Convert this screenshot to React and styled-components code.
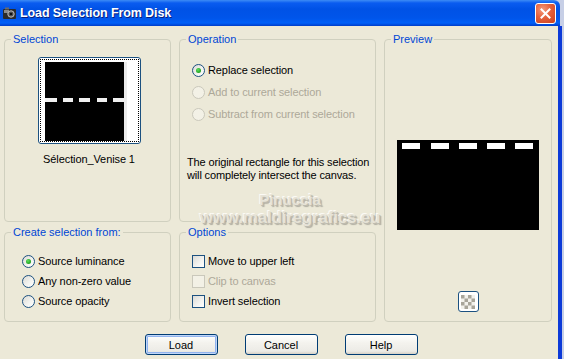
import React from 'react';
import styled, { createGlobalStyle } from 'styled-components';

const GlobalStyle = createGlobalStyle`
  html, body {
    margin: 0;
    padding: 0;
    background: #c7cfe6;
  }
  body {
    font-family: 'Liberation Sans', Arial, sans-serif;
    font-size: 11px;
    color: #000;
  }
`;

const Window = styled.div`
  width: 562px;
  height: 359px;
  display: flex;
  flex-direction: column;
  overflow: hidden;
`;

const TitleBar = styled.div`
  height: 26px;
  width: 560px;
  box-sizing: border-box;
  display: flex;
  align-items: center;
  padding: 0 4px 0 2px;
  gap: 3px;
  background: linear-gradient(
    180deg,
    #3d8cf5 0,
    #0a5cf0 3px,
    #0052e6 9px,
    #0055ea 18px,
    #0060f8 23px,
    #0048d8 25px,
    #003dc8 26px
  );
  border-top-right-radius: 6px;
`;

const Title = styled.span`
  flex: 1;
  color: #fff;
  font-family: 'Liberation Sans', Arial, sans-serif;
  font-weight: 700;
  font-size: 12.5px;
  letter-spacing: -0.1px;
  text-shadow: 1px 1px 0 #0a1e7a;
`;

const CloseButton = styled.div`
  width: 21px;
  height: 21px;
  box-sizing: border-box;
  border: 1px solid #fff;
  border-radius: 3px;
  background: radial-gradient(circle at 35% 30%, #f49a7c 0, #e5603b 45%, #c8401e 100%);
  display: flex;
  align-items: center;
  justify-content: center;
`;

const Body = styled.div`
  position: relative;
  flex: 1;
  width: 554px;
  background: #ece9d8;
  border-right: 4px solid #0c3ad8;
  padding: 7px 0 0 4px;
  box-sizing: content-box;
`;

const Panels = styled.div`
  display: grid;
  grid-template-columns: 167px 197px 168px;
  grid-template-rows: 189px 96px;
  column-gap: 8px;
  row-gap: 4px;
`;

const Group = styled.fieldset`
  margin: 0;
  padding: 0;
  min-width: 0;
  border: 1px solid #d0d0bf;
  border-radius: 4px;
  box-sizing: border-box;
  grid-column: ${(props) => props.$col};
  grid-row: ${(props) => props.$row};
  display: flex;
  flex-direction: column;
`;

const Legend = styled.legend`
  margin-left: 6px;
  padding: 0 2px;
  line-height: 13px;
  font-size: 11px;
  color: #0046d5;
`;

const GroupBody = styled.div`
  display: flex;
  flex-direction: column;
  align-items: ${(props) => (props.$center ? 'center' : 'stretch')};
  padding: ${(props) => props.$pad || '0'};
`;

const Thumb = styled.div`
  width: 103px;
  height: 87px;
  box-sizing: border-box;
  border: 1px solid #1c5180;
  border-radius: 3px;
  background: #fff;
  padding: 1px;
  margin-left: 3px;
`;

const FocusRect = styled.div`
  width: 100%;
  height: 100%;
  box-sizing: border-box;
  border: 1px dotted #000;
  display: flex;
`;

const Caption = styled.div`
  margin-top: 9px;
  margin-left: 3px;
  line-height: 13px;
  letter-spacing: -0.1px;
`;

const Row = styled.div`
  display: flex;
  align-items: center;
  gap: 3px;
  height: ${(props) => props.$h || 20}px;
  padding-left: ${(props) => props.$indent || 0}px;
  color: ${(props) => (props.$disabled ? '#aca899' : '#000')};
  letter-spacing: -0.1px;
  white-space: nowrap;
`;

const Radio = styled.span`
  width: 13px;
  height: 13px;
  box-sizing: border-box;
  border-radius: 50%;
  border: 1px solid ${(props) => (props.$disabled ? '#cac8bb' : '#1c5180')};
  background: ${(props) =>
    props.$disabled
      ? '#f3f1e6'
      : 'linear-gradient(135deg, #dcdbd5 0, #f4f4f1 60%, #ffffff 100%)'};
  display: inline-flex;
  align-items: center;
  justify-content: center;
  flex-shrink: 0;
`;

const Dot = styled.span`
  width: 5px;
  height: 5px;
  border-radius: 50%;
  background: radial-gradient(circle at 40% 35%, #5ce05c 0, #21a121 70%);
`;

const Check = styled.span`
  width: 13px;
  height: 13px;
  box-sizing: border-box;
  border: 1px solid ${(props) => (props.$disabled ? '#cac8bb' : '#1c5180')};
  background: ${(props) =>
    props.$disabled
      ? '#f3f1e6'
      : 'linear-gradient(135deg, #dcdbd5 0, #f4f4f1 60%, #ffffff 100%)'};
  flex-shrink: 0;
`;

const Note = styled.p`
  margin: 31px 0 0;
  line-height: 12.5px;
  letter-spacing: -0.15px;
  white-space: nowrap;
`;

const PreviewImage = styled.svg`
  display: block;
  margin-top: 94px;
`;

const SmallButton = styled.div`
  width: 21px;
  height: 21px;
  box-sizing: border-box;
  border: 1px solid #1c5180;
  border-radius: 3px;
  background: #fff;
  margin-top: 61px;
  display: flex;
  align-items: center;
  justify-content: center;
`;

const ButtonRow = styled.div`
  display: flex;
  justify-content: center;
  gap: 27px;
  margin-top: 12px;
`;

const Button = styled.div`
  width: 73px;
  height: 21px;
  box-sizing: border-box;
  border: 1px solid #003c74;
  border-radius: 3px;
  background: linear-gradient(180deg, #ffffff 0, #f4f3ee 40%, #ecebe6 85%, #d6d0c5 100%);
  box-shadow: ${(props) =>
    props.$primary
      ? 'inset 0 0 0 1px #c0d6f8, inset 0 0 0 2px #91b3ee'
      : 'none'};
  display: flex;
  align-items: center;
  justify-content: center;
  font-size: 11px;
`;

const Watermark = styled.div`
  position: absolute;
  left: 188px;
  top: 165px;
  width: 204px;
  text-align: center;
  font-family: 'Liberation Sans', Arial, sans-serif;
  font-weight: 700;
  color: #e6e3d7;
  text-shadow: 1px 1px 0 #bebbb0, 2px 2px 1px rgba(90, 88, 80, 0.4), -1px -1px 0 #fbfaf5;
  pointer-events: none;
`;

const MarkLine = styled.div`
  font-size: ${(props) => props.$size}px;
  line-height: ${(props) => props.$lh}px;
  letter-spacing: ${(props) => props.$spacing || 0}px;
`;

function AppIcon() {
  return (
    <svg width="15" height="15" viewBox="0 0 15 15">
      <rect x="1" y="3" width="13" height="10" rx="1" fill="#2b2b2b" />
      <rect x="2" y="4" width="5" height="3" fill="#8a8a8a" />
      <circle cx="9" cy="8" r="3.2" fill="#555" stroke="#bdbdbd" strokeWidth="1" />
      <circle cx="9" cy="8" r="1.3" fill="#111" />
      <rect x="3" y="1.5" width="4" height="2" fill="#6b6b6b" />
    </svg>
  );
}

function SelectionThumb() {
  const dashes = [
    [4, 12],
    [22, 10],
    [38, 11],
    [56, 10],
    [72, 11],
  ];
  return (
    <svg width="97" height="81" viewBox="0 0 97 81">
      <rect width="97" height="81" fill="#fff" />
      <rect x="83" y="2" width="3" height="79" fill="#ececec" />
      <rect x="4" y="2" width="79" height="79" fill="#000" />
      {dashes.map(([x, w]) => (
        <rect key={x} x={x} y="38" width={w} height="4" fill="#f0f0f0" />
      ))}
    </svg>
  );
}

function PreviewPicture() {
  const dashes = [5, 34, 62, 90, 118];
  return (
    <PreviewImage width="142" height="90" viewBox="0 0 142 90">
      <rect width="142" height="90" fill="#000" />
      {dashes.map((x) => (
        <rect key={x} x={x} y="3" width="18" height="6" fill="#fff" />
      ))}
    </PreviewImage>
  );
}

function Checker() {
  const cells = [];
  for (let r = 0; r < 4; r++) {
    for (let c = 0; c < 4; c++) {
      if ((r + c) % 2 === 0) {
        cells.push(<rect key={`${r}-${c}`} x={c * 3.5} y={r * 3.5} width="3.5" height="3.5" fill="#a8a59a" />);
      }
    }
  }
  return (
    <svg width="14" height="14" viewBox="0 0 14 14">
      <rect width="14" height="14" fill="#f2f1ec" />
      {cells}
    </svg>
  );
}

export default function App() {
  return (
    <>
      <GlobalStyle />
      <Window>
        <TitleBar>
          <AppIcon />
          <Title>Load Selection From Disk</Title>
          <CloseButton>
            <svg width="11" height="11" viewBox="0 0 11 11">
              <path d="M1.5 1.5 L9.5 9.5 M9.5 1.5 L1.5 9.5" stroke="#fff" strokeWidth="2" strokeLinecap="square" />
            </svg>
          </CloseButton>
        </TitleBar>
        <Body>
          <Panels>
            <Group $col="1" $row="1">
              <Legend>Selection</Legend>
              <GroupBody $center $pad="11px 0 0">
                <Thumb>
                  <FocusRect>
                    <SelectionThumb />
                  </FocusRect>
                </Thumb>
                <Caption>Sélection_Venise 1</Caption>
              </GroupBody>
            </Group>
            <Group $col="2" $row="1">
              <Legend>Operation</Legend>
              <GroupBody $pad="13px 0 0 7px">
                <Row $h={22} $indent={5}>
                  <Radio>
                    <Dot />
                  </Radio>
                  Replace selection
                </Row>
                <Row $h={22} $indent={5} $disabled>
                  <Radio $disabled />
                  Add to current selection
                </Row>
                <Row $h={22} $indent={5} $disabled>
                  <Radio $disabled />
                  Subtract from current selection
                </Row>
                <Note>
                  The original rectangle for this selection
                  <br />
                  will completely intersect the canvas.
                </Note>
              </GroupBody>
            </Group>
            <Group $col="3" $row="1 / span 2">
              <Legend>Preview</Legend>
              <GroupBody $center>
                <PreviewPicture />
                <SmallButton>
                  <Checker />
                </SmallButton>
              </GroupBody>
            </Group>
            <Group $col="1" $row="2">
              <Legend>Create selection from:</Legend>
              <GroupBody $pad="12px 0 0 17px">
                <Row>
                  <Radio>
                    <Dot />
                  </Radio>
                  Source luminance
                </Row>
                <Row>
                  <Radio />
                  Any non-zero value
                </Row>
                <Row>
                  <Radio />
                  Source opacity
                </Row>
              </GroupBody>
            </Group>
            <Group $col="2" $row="2">
              <Legend>Options</Legend>
              <GroupBody $pad="12px 0 0 12px">
                <Row>
                  <Check />
                  Move to upper left
                </Row>
                <Row $disabled>
                  <Check $disabled />
                  Clip to canvas
                </Row>
                <Row>
                  <Check />
                  Invert selection
                </Row>
              </GroupBody>
            </Group>
          </Panels>
          <ButtonRow>
            <Button $primary>Load</Button>
            <Button>Cancel</Button>
            <Button>Help</Button>
          </ButtonRow>
          <Watermark>
            <MarkLine $size={15} $lh={17}>Pinuccia</MarkLine>
            <MarkLine $size={17} $lh={19} $spacing={-0.2}>
              www.maldiregrafics.eu
            </MarkLine>
          </Watermark>
        </Body>
      </Window>
    </>
  );
}
